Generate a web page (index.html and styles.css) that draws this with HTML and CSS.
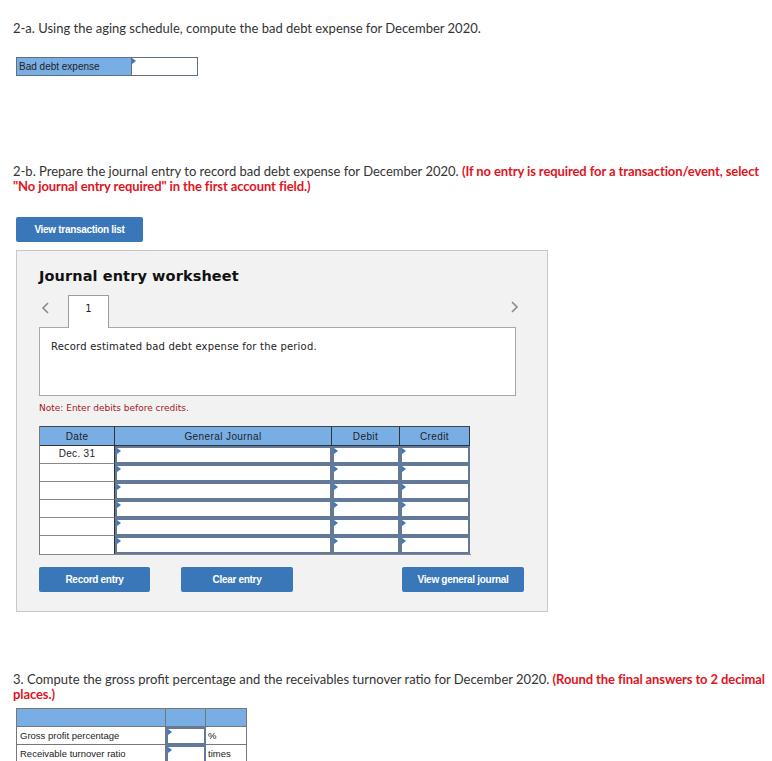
FILE: index.html
```html
<!DOCTYPE html>
<html>
<head>
<meta charset="utf-8">
<link rel="stylesheet" href="styles.css">
</head>
<body>
<div class="page">
  <p class="q q-a">2-a. Using the aging schedule, compute the bad debt expense for December 2020.</p>

  <div class="bde">
    <div class="bde-label">Bad debt expense</div>
    <div class="bde-input inp"></div>
  </div>

  <p class="q q-b">2-b. Prepare the journal entry to record bad debt expense for December 2020. <span class="red">(If no entry is required for a transaction/event, select "No journal entry required" in the first account field.)</span></p>

  <button class="btn btn-list">View transaction list</button>

  <div class="panel">
    <h2 class="panel-title">Journal entry worksheet</h2>
    <div class="tabs">
      <svg class="arrow" width="8" height="12" viewBox="0 0 8 12"><polyline points="7,1 2,6 7,11" fill="none" stroke="#8a8a8a" stroke-width="1.6"/></svg>
      <div class="tab">1</div>
      <div class="tabs-fill"></div>
      <svg class="arrow arrow-r" width="8" height="12" viewBox="0 0 8 12"><polyline points="1,1 6,6 1,11" fill="none" stroke="#8a8a8a" stroke-width="1.6"/></svg>
    </div>
    <div class="desc">Record estimated bad debt expense for the period.</div>
    <p class="note">Note: Enter debits before credits.</p>

    <div class="jt">
      <div class="jh">Date</div>
      <div class="jh">General Journal</div>
      <div class="jh">Debit</div>
      <div class="jh">Credit</div>

      <div class="jd">Dec. 31</div><div class="jc"><div class="inp"></div></div><div class="jc"><div class="inp"></div></div><div class="jc"><div class="inp"></div></div>
      <div class="jd"></div><div class="jc"><div class="inp"></div></div><div class="jc"><div class="inp"></div></div><div class="jc"><div class="inp"></div></div>
      <div class="jd"></div><div class="jc"><div class="inp"></div></div><div class="jc"><div class="inp"></div></div><div class="jc"><div class="inp"></div></div>
      <div class="jd"></div><div class="jc"><div class="inp"></div></div><div class="jc"><div class="inp"></div></div><div class="jc"><div class="inp"></div></div>
      <div class="jd"></div><div class="jc"><div class="inp"></div></div><div class="jc"><div class="inp"></div></div><div class="jc"><div class="inp"></div></div>
      <div class="jd"></div><div class="jc"><div class="inp"></div></div><div class="jc"><div class="inp"></div></div><div class="jc"><div class="inp"></div></div>
    </div>

    <div class="actions">
      <button class="btn btn-rec">Record entry</button>
      <button class="btn btn-clr">Clear entry</button>
      <button class="btn btn-gen">View general journal</button>
    </div>
  </div>

  <p class="q q-3">3. Compute the gross profit percentage and the receivables turnover ratio for December 2020. <span class="red">(Round the final answers to 2 decimal places.)</span></p>

  <div class="rt">
    <div class="rh"></div><div class="rh"></div><div class="rh"></div>
    <div class="rl">Gross profit percentage</div><div class="ri"><div class="inp"></div></div><div class="ru">%</div>
    <div class="rl">Receivable turnover ratio</div><div class="ri"><div class="inp"></div></div><div class="ru">times</div>
  </div>
</div>
</body>
</html>
```

FILE: styles.css
```css
html, body {
  margin: 0;
  padding: 0;
  background: #fff;
}
.page {
  padding: 0 0 0 13px;
  font-family: "Lato", "Liberation Sans", sans-serif;
  color: #333;
  display: flex;
  flex-direction: column;
  align-items: flex-start;
}
.q {
  margin: 0;
  font-size: 13px;
  line-height: 15px;
  color: #333;
}
.q-a { margin-top: 21px; }
.q-b { margin-top: 88px; width: 757px; }
.q-3 { margin-top: 60px; width: 757px; }
.red {
  color: #e0141e;
  font-weight: bold;
  letter-spacing: -0.1px;
}
.bde {
  margin: 21px 0 0 3px;
  display: flex;
  height: 19px;
  border: 1px solid #5e6f82;
  box-sizing: border-box;
  width: 182px;
}
.bde-label {
  width: 115px;
  background: #78aee4;
  font-family: "Liberation Sans", sans-serif;
  font-size: 10px;
  line-height: 17px;
  padding-left: 2px;
  box-sizing: border-box;
  color: #222;
  border-right: 1px solid #5e6f82;
}
.bde-input {
  flex: 1;
  border: none !important;
}
.inp {
  position: relative;
  background: #fff;
  border: 2px solid #62799a;
  box-sizing: border-box;
  height: 100%;
}
.inp::before {
  content: "";
  position: absolute;
  left: 0;
  top: 0;
  border-top: 3px solid transparent;
  border-bottom: 3px solid transparent;
  border-left: 4px solid #3a78c0;
}
.btn {
  font-family: "Liberation Sans", sans-serif;
  font-weight: bold;
  font-size: 10px;
  letter-spacing: -0.3px;
  color: #fff;
  background: #3a77b9;
  border: none;
  border-radius: 2px;
  height: 25px;
  padding: 0;
  flex-shrink: 0;
  cursor: pointer;
}
.btn-list {
  margin: 23px 0 0 3px;
  width: 127px;
}
.panel {
  margin: 8px 0 0 3px;
  width: 532px;
  height: 362px;
  box-sizing: border-box;
  background: #f2f2f2;
  border: 1px solid #c8c8c8;
  padding: 16px 30px 0 22px;
}
.panel-title {
  margin: 0;
  font-family: "DejaVu Sans", Verdana, sans-serif;
  font-size: 14.5px;
  line-height: 18px;
  font-weight: bold;
  color: #111;
  letter-spacing: 0.1px;
}
.tabs {
  margin-top: 10px;
  display: flex;
  align-items: flex-end;
  height: 32px;
}
.arrow {
  align-self: center;
  margin: 0 19px 6px 2px;
}
.arrow-r {
  margin: 0 -2px 8px 0;
}
.tab {
  width: 41px;
  height: 33px;
  box-sizing: border-box;
  background: #fff;
  border: 1px solid #9c9c9c;
  border-bottom: none;
  font-family: "DejaVu Sans", sans-serif;
  font-size: 10px;
  text-align: center;
  line-height: 25px;
  color: #222;
  position: relative;
  z-index: 1;
  margin-bottom: -1px;
}
.tabs-fill { flex: 1; }
.desc {
  width: 477px;
  height: 69px;
  box-sizing: border-box;
  background: #fff;
  border: 1px solid #a8a8a8;
  font-family: "DejaVu Sans", sans-serif;
  font-size: 10px;
  color: #222;
  padding: 13px 0 0 11px;
  letter-spacing: 0.2px;
}
.note {
  margin: 6px 0 0 0;
  font-family: "DejaVu Sans", sans-serif;
  font-size: 9px;
  color: #a3181e;
  line-height: 12px;
}
.jt {
  margin-top: 12px;
  display: grid;
  grid-template-columns: 75px 217px 68px 70px;
  grid-template-rows: 20px repeat(6, 18px);
  width: 431px;
  border-left: 1px solid #777;
  border-bottom: 1px solid #888;
  box-sizing: content-box;
}
.jh {
  background: #78aee4;
  border-top: 1px solid #444;
  border-right: 1px solid #333;
  border-bottom: 1px solid #333;
  font-family: "Liberation Sans", sans-serif;
  font-size: 10px;
  letter-spacing: 0.4px;
  color: #222;
  text-align: center;
  line-height: 19px;
}
.jd {
  background: #fff;
  border-right: 1px solid #333;
  border-bottom: 1px solid #888;
  font-family: "Liberation Sans", sans-serif;
  font-size: 10px;
  letter-spacing: 0.3px;
  color: #222;
  text-align: center;
  line-height: 15px;
}
.jt .jd:nth-last-child(4) { border-bottom: none; }
.jc {
  background: #fff;
  height: 18px;
}
.jc .inp { height: 18px; }
.actions {
  margin-top: 12px;
  display: flex;
}
.btn-rec { width: 111px; }
.btn-clr { width: 112px; margin-left: 31px; }
.btn-gen { width: 122px; margin-left: 109px; }
.rt {
  margin: 6px 0 0 3px;
  display: grid;
  grid-template-columns: 149px 40px 41px;
  grid-template-rows: 18px 18px 18px;
  border-left: 1px solid #777;
  border-top: 1px solid #777;
}
.rh {
  background: #78aee4;
  border-right: 1px solid #777;
  border-bottom: 1px solid #777;
}
.rl, .ru {
  background: #fff;
  border-right: 1px solid #777;
  border-bottom: 1px solid #777;
  font-family: "Liberation Sans", sans-serif;
  font-size: 9.5px;
  color: #222;
  line-height: 17px;
  padding-left: 3px;
}
.ru { padding-left: 2px; }
.ri { height: 18px; }
.ri .inp { height: 18px; }
```
